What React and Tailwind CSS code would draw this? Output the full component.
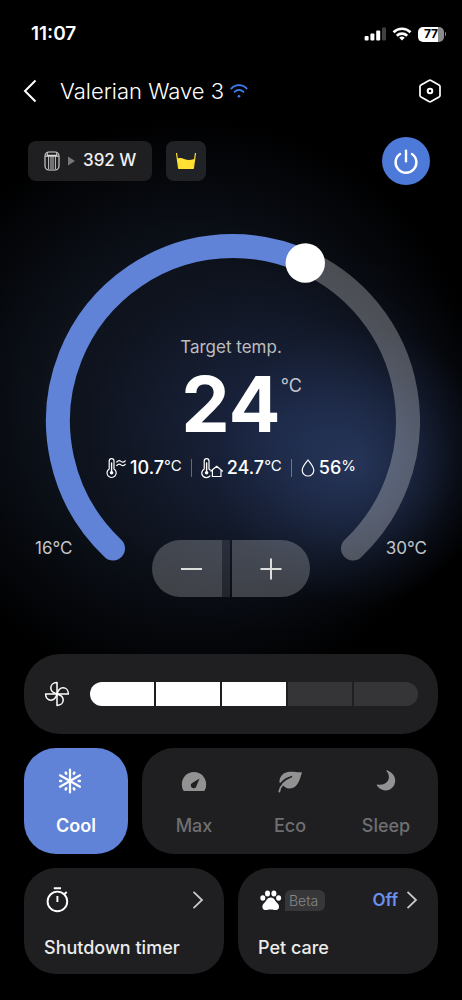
import React, { useState } from "react";

const MIN_TEMP = 16;
const MAX_TEMP = 30;

const SignalIcon = () => (
  <svg width="22" height="14" viewBox="0 0 22 14" fill="white" aria-hidden="true">
    <rect x="0.6" y="9" width="4" height="4.5" rx="1" />
    <rect x="6.4" y="6.5" width="4" height="7" rx="1" />
    <rect x="12.2" y="3.6" width="4" height="9.9" rx="1" />
    <rect x="18" y="0.4" width="4" height="13.1" rx="1" opacity="0.25" />
  </svg>
);

const StatusWifiIcon = () => (
  <svg width="20" height="14" viewBox="0 0 20 14" fill="none" stroke="white" strokeWidth="2.6" aria-hidden="true">
    <path d="M1.5 5.2a12.2 12.2 0 0 1 17 0" />
    <path d="M4.8 8.7a7.5 7.5 0 0 1 10.4 0" />
    <path d="M10 13.6 7.2 10.8a4 4 0 0 1 5.6 0Z" fill="white" stroke="none" />
  </svg>
);

const Battery = () => (
  <div className="flex items-center gap-px">
    <div className="flex h-[15px] w-[26px] items-center justify-center rounded-[5px] bg-[linear-gradient(to_right,#ffffff_78%,#8b8b8b_78%)] text-xs font-bold leading-none text-black">
      77
    </div>
    <div className="h-1 w-px rounded-r bg-[#8b8b8b]" />
  </div>
);

const BackIcon = () => (
  <svg width="14" height="24" viewBox="0 0 14 24" fill="none" stroke="white" strokeWidth="2" aria-hidden="true">
    <path d="M12.5 1.5 2 12l10.5 10.5" />
  </svg>
);

const BlueWifiIcon = () => (
  <svg width="18" height="16" viewBox="0 0 18 16" fill="none" stroke="#3f7ef5" strokeWidth="1.7" strokeLinecap="round" aria-hidden="true">
    <path d="M1.3 5.6c4.3-4.6 11.1-4.6 15.4 0" />
    <path d="M4.5 8.9c2.7-2.6 6.3-2.6 9 0" />
    <circle cx="9" cy="13.2" r="1.3" fill="#3f7ef5" stroke="none" />
  </svg>
);

const HexIcon = () => (
  <svg width="24" height="24" viewBox="0 0 24 24" fill="none" stroke="white" strokeWidth="1.7" strokeLinejoin="round" aria-hidden="true">
    <path d="M11 1.4q1-.5 2 0l8 4.5q1 .6 1 1.6v9q0 1-1 1.6l-8 4.5q-1 .5-2 0l-8-4.5q-1-.6-1-1.6v-9q0-1 1-1.6Z" />
    <circle cx="12" cy="12" r="2.3" strokeWidth="2" />
  </svg>
);

const UnitIcon = () => (
  <svg width="16" height="20" viewBox="0 0 16 20" fill="none" stroke="#d8d8d8" strokeWidth="1.1" aria-hidden="true">
    <rect x="1" y="1" width="14" height="18" rx="4" />
    <path d="M3.2 1.8v2.600h9.600V1.800M1.200 5.200h13.600" />
    <path d="M4.600 5.200V18M7 5.200V18M9 5.200V18M11.400 5.200V18" strokeWidth="0.900" />
  </svg>
);

const TankIcon = () => (
  <svg width="22" height="18" viewBox="0 0 22 18" fill="none" aria-hidden="true">
    <path d="M1.5 1 3.6 16.2h14.8L20.5 1" stroke="#ffe033" strokeWidth="1.2" />
    <path d="M2.6 6.4c3-.8 5.400.2 8 1.100s5.600.2 8.800-.5L18.200 17H3.800Z" fill="#ffe033" />
  </svg>
);

const PowerIcon = () => (
  <svg width="28" height="28" viewBox="0 0 28 28" fill="none" stroke="white" strokeWidth="2.400" strokeLinecap="round" aria-hidden="true">
    <path d="M14 3.800v10.400" />
    <path d="M8 6.900a10.400 10.400 0 1 0 12 0" />
  </svg>
);

const OutdoorIcon = () => (
  <svg width="20" height="22" viewBox="0 0 20 22" fill="none" stroke="white" strokeWidth="1.2" strokeLinecap="round" aria-hidden="true">
    <path d="M3.200 12V4a2.400 2.400 0 0 1 4.800 0v8a4.600 4.600 0 1 1-4.800 0Z" />
    <path d="M5.600 6v8" strokeWidth="1.400" />
    <circle cx="5.600" cy="15.800" r="1.800" fill="white" stroke="none" />
    <path d="M10.800 5c1.400-1.700 2.800-1.700 4.200-.6s2.800 1 4.200-.6M10.800 8.500c1.400-1.700 2.800-1.700 4.200-.6s2.800 1 4.200-.6" />
  </svg>
);

const IndoorIcon = () => (
  <svg width="22" height="22" viewBox="0 0 22 22" fill="none" stroke="white" strokeWidth="1.2" strokeLinecap="round" strokeLinejoin="round" aria-hidden="true">
    <path d="M9 18.900A4.600 4.600 0 1 1 3.200 12V4a2.400 2.400 0 0 1 4.800 0v8l1.200 1" />
    <path d="M5.600 6v8" strokeWidth="1.400" />
    <circle cx="5.600" cy="15.800" r="1.800" fill="white" stroke="none" />
    <path d="m10 14 5.700-4.700 5.700 4.700M11.400 13.200v6.300h8.600v-6.300" />
  </svg>
);

const DropIcon = () => (
  <svg width="14" height="20" viewBox="0 0 14 20" fill="none" stroke="white" strokeWidth="1.200" strokeLinejoin="round" aria-hidden="true">
    <path d="M7 2C4.800 5 1.200 8.600 1.200 12.200a5.800 5.800 0 0 0 11.600 0C12.800 8.600 9.200 5 7 2Z" />
  </svg>
);

const FanIcon = () => (
  <svg width="26" height="26" viewBox="0 0 26 26" fill="none" stroke="white" strokeWidth="1.500" strokeLinejoin="round" aria-hidden="true">
    <path id="blade" d="M13 13V1.600C9 1.600 6.800 4.100 6.800 7s2.600 5 6.200 6Z" />
    <use href="#blade" transform="rotate(90 13 13)" />
    <use href="#blade" transform="rotate(180 13 13)" />
    <use href="#blade" transform="rotate(270 13 13)" />
  </svg>
);

// wide box: the flake sits left of the label's middle
const SnowIcon = () => (
  <svg width="38" height="26" viewBox="0 0 38 26" fill="none" stroke="white" strokeWidth="2.200" strokeLinecap="round" aria-hidden="true">
    <path d="M13 1.600v22.800M3 7.300l20 11.400M23 7.300 3 18.700" />
    <path
      strokeWidth="2.600"
      d="M8.700 4.700l.5.900M17.300 4.700l-.5.900M8.700 21.300l.5-.9M17.300 21.300l-.5-.9M3.200 13h1M22.800 13h-1"
    />
  </svg>
);

const GaugeIcon = () => (
  <svg width="26" height="26" viewBox="0 0 26 26" fill="#929293" aria-hidden="true">
    <path
      fillRule="evenodd"
      d="M2.400 22.400Q.8 19.800.8 16.500C.8 9.300 6.200 4 13 4s12.200 5.300 12.200 12.500q0 3.300-1.600 5.900-.4.600-1 .6H3.400q-.6 0-1-.6ZM18.600 10.400l-7 4.300a2.900 2.900 0 1 0 4 2.800Z"
    />
  </svg>
);

const LeafIcon = () => (
  <svg width="26" height="26" viewBox="0 0 26 26" fill="none" aria-hidden="true">
    <path d="M2.500 14.800C2 8.500 6.500 3.900 13 3.800c4.300-.1 7.800.7 11.200.5.500 0 .8.300.6.800-2 6.500-4.200 15.400-12 15.400-2 0-3.600-.5-4.800-1.500Z" fill="#929293" />
    <path d="M.8 21c2.400-6.500 7-10 14.400-12.200" stroke="#1f1f21" strokeWidth="2.200" />
    <path d="M2.300 23.500c1.200-6.400 5.400-10.400 12.900-13.500" stroke="#929293" strokeWidth="1.800" strokeLinecap="round" />
    <path d="m2.600 16 2.800-2.400L3.800 18Z" fill="#1f1f21" />
    <path d="M4.800 23.500c.4-1.600 1-2.800 2-3.900" stroke="#1f1f21" strokeWidth="1.600" />
  </svg>
);

const MoonIcon = () => (
  <svg width="26" height="26" viewBox="0 0 26 26" fill="#929293" aria-hidden="true">
    <path d="M13.600 3.300c-.6-.7 0-1.200.8-.9 4.600 1.700 7.800 5.500 7.800 10 0 5.600-4.300 10-9.600 10-3.600 0-7-1.900-8.600-4.800-.4-.8 0-1.300.9-1.100 6 1 11-2.500 11-7.600 0-2.100-.9-4-2.300-5.600Z" />
  </svg>
);

const TimerIcon = () => (
  <svg width="26" height="26" viewBox="0 0 26 26" fill="none" stroke="white" strokeWidth="1.900" aria-hidden="true">
    <circle cx="13.400" cy="14.400" r="9.800" />
    <path d="M13.400 9v6M9.800 1.300h7.200M20.300 7.300l2.400-2.300" />
  </svg>
);

const PawIcon = () => (
  <svg width="24" height="22" viewBox="0 0 24 22" fill="white" aria-hidden="true">
    <ellipse cx="4.800" cy="9" rx="2.500" ry="2.800" />
    <ellipse cx="9.500" cy="4.500" rx="2.500" ry="3" />
    <ellipse cx="15.900" cy="4.500" rx="2.500" ry="3" />
    <ellipse cx="20.600" cy="9" rx="2.500" ry="2.800" />
    <path d="M12.700 8.500c3.300 0 4.100 3 6 5s2.700 3.200 2.200 5.200c-.6 2.400-2.800 2.600-4.600 2.200-2.500-.6-4.800-.6-7.200 0-1.800.4-4 .2-4.600-2.200-.5-2 .3-3.200 2.200-5.200s2.700-5 6-5Z" />
  </svg>
);

const ChevronIcon = () => (
  <svg width="12" height="20" viewBox="0 0 12 20" fill="none" stroke="#c9c9c9" strokeWidth="1.800" aria-hidden="true">
    <path d="m1.500 1.800 8.500 8.200-8.500 8.200" />
  </svg>
);

// the arc opens downwards, 273 degrees in all
const Ring = () => (
  <svg width="378" height="328" viewBox="0 0 378 328" fill="none" strokeWidth="24" strokeLinecap="round" aria-hidden="true">
    <path d="M263.600 27.800A175 175 0 0 1 311 314.400" stroke="white" strokeOpacity="0.270" />
    <path d="M71 314.400A175 175 0 0 1 191 12A175 175 0 0 1 263.600 27.800" stroke="#6083d8" />
    <circle cx="263.300" cy="29" r="19.700" fill="white" />
  </svg>
);

const Reading = ({ icon, value, unit }) => (
  <div className="flex items-center gap-1">
    {icon}
    <span className="flex items-start text-lg font-medium leading-6 text-white">
      {value}
      <span className="text-[15px] font-normal leading-5">{unit}</span>
    </span>
  </div>
);

const MODES = [
  { name: "Max", Icon: GaugeIcon },
  { name: "Eco", Icon: LeafIcon },
  { name: "Sleep", Icon: MoonIcon },
];

export default function App() {
  const [temp, setTemp] = useState(24);
  const [fan, setFan] = useState(3);

  return (
    <div className="min-h-screen bg-black pb-[26px] font-['Inter',sans-serif] text-white">
      <div className="bg-[radial-gradient(circle_140px_at_77%_71%,#31457399_0,#2c3f6b66_40%,#2c3f6b26_70%,transparent),radial-gradient(ellipse_225px_200px_at_60%_66%,#1b2743_0,#18213ad9_30%,#131a2c8c_60%,#0b0f1b33_85%,transparent),radial-gradient(ellipse_290px_290px_at_42%_62%,#141a28_0,#0d121b_50%,#05070b_80%,transparent)]">
        <div className="flex h-[68px] items-center justify-between pl-[31px] pr-4">
          <span className="text-[19px] font-semibold leading-6">11:07</span>
          <div className="flex items-center gap-[6px]">
            <SignalIcon />
            <StatusWifiIcon />
            <Battery />
          </div>
        </div>

        <header className="flex h-[46px] items-center justify-between pl-[23px] pr-5">
          <div className="flex items-center">
            <button aria-label="Back" className="mr-[23px] cursor-pointer">
              <BackIcon />
            </button>
            <h1 className="text-[22px] font-light leading-7">Valerian Wave 3</h1>
            <span className="ml-[6px]">
              <BlueWifiIcon />
            </span>
          </div>
          <button aria-label="Settings" className="cursor-pointer">
            <HexIcon />
          </button>
        </header>

        <div className="mt-[23px] flex items-center justify-between pl-7 pr-8">
          <div className="flex gap-[14px]">
            <div className="flex h-10 items-center gap-2 rounded-lg bg-[#1f1f21] px-4 text-[17px] font-medium text-[#f0f0f0]">
              <UnitIcon />
              <svg width="7" height="10" viewBox="0 0 7 10" fill="#77777a" aria-hidden="true">
                <path d="M0 .5 7 5 0 9.500Z" />
              </svg>
              392 W
            </div>
            <div className="flex size-10 items-center justify-center rounded-lg bg-[#212225]">
              <TankIcon />
            </div>
          </div>
          <button aria-label="Power" className="flex size-12 cursor-pointer items-center justify-center rounded-full bg-[#4d79d9]">
            <PowerIcon />
          </button>
        </div>

        <div className="grid pb-[57px] pt-[49px]">
          <div className="col-start-1 row-start-1 flex justify-center">
            <Ring />
          </div>
          <div className="col-start-1 row-start-1 flex flex-col pt-[103px]">
            <p className="text-center text-[17px] leading-5 text-[#bdbdbf]">Target temp.</p>
            <div className="mb-3 mt-[7px] flex justify-center">
              <div className="relative text-[77px] font-bold leading-[80px]">
                {temp}
                <span className="absolute left-full top-3 text-lg font-normal leading-5 text-[#c4c6cc]">°C</span>
              </div>
            </div>
            <div className="flex items-center justify-center gap-[9px]">
              <Reading icon={<OutdoorIcon />} value="10.7" unit="°C" />
              <span className="h-[18px] w-px bg-white/35" />
              <Reading icon={<IndoorIcon />} value="24.7" unit="°C" />
              <span className="h-[18px] w-px bg-white/35" />
              <Reading icon={<DropIcon />} value="56" unit="%" />
            </div>
            <div className="mt-[60px] flex items-start justify-between px-[35px] text-[17px] leading-4 text-[#c4c5c9]">
              <span className="w-11">{MIN_TEMP}°C</span>
              <div className="flex h-[57px] gap-[2px] overflow-hidden rounded-full">
                <button
                  aria-label="Lower temperature"
                  onClick={() => setTemp(Math.max(MIN_TEMP, temp - 1))}
                  className="flex w-[78px] cursor-pointer items-center justify-center bg-[linear-gradient(to_right,#ffffff38_70px,#ffffff1a_70px)]"
                >
                  <span className="h-[2px] w-[21px] bg-[#dddddd]" />
                </button>
                <button
                  aria-label="Raise temperature"
                  onClick={() => setTemp(Math.min(MAX_TEMP, temp + 1))}
                  className="flex w-[78px] cursor-pointer items-center justify-center bg-white/22"
                >
                  <svg width="22" height="22" viewBox="0 0 22 22" stroke="#dddddd" strokeWidth="2" aria-hidden="true">
                    <path d="M11 .5v21M.5 11h21" />
                  </svg>
                </button>
              </div>
              <span className="w-11 text-right">{MAX_TEMP}°C</span>
            </div>
          </div>
        </div>
      </div>

      <div className="flex flex-col gap-[14px] px-6">
        <div className="flex items-center gap-5 rounded-[36px] bg-[#1f1f21] px-5 py-[27px]">
          <FanIcon />
          <div className="flex h-6 flex-1 gap-[2px] overflow-hidden rounded-full">
            {[1, 2, 3, 4, 5].map((level) => (
              <button
                key={level}
                aria-label={`Fan speed ${level}`}
                onClick={() => setFan(level)}
                className={`flex-1 cursor-pointer ${level <= fan ? "bg-white" : "bg-[#353537]"}`}
              />
            ))}
          </div>
        </div>

        <div className="flex gap-[14px]">
          <button className="flex w-[104px] cursor-pointer flex-col items-center gap-5 rounded-[32px] bg-[#6083d8] pb-4 pt-5 text-lg font-semibold leading-6">
            <SnowIcon />
            Cool
          </button>
          <div className="grid flex-1 grid-cols-3 rounded-[32px] bg-[#1f1f21] px-1">
            {MODES.map(({ name, Icon }) => (
              <button key={name} className="flex cursor-pointer flex-col items-center gap-5 pb-4 pt-5 text-lg font-medium leading-6 text-[#6f6f71]">
                <Icon />
                {name}
              </button>
            ))}
          </div>
        </div>

        <div className="grid grid-cols-2 gap-[14px]">
          <button className="flex cursor-pointer flex-col gap-6 rounded-[32px] bg-[#1f1f21] px-5 pb-[14px] pt-5 text-left">
            <span className="flex h-6 w-full items-center justify-between">
              <TimerIcon />
              <ChevronIcon />
            </span>
            <span className="text-lg font-medium leading-6 text-[#ebebeb]">Shutdown timer</span>
          </button>
          <button className="flex cursor-pointer flex-col gap-6 rounded-[32px] bg-[#1f1f21] px-5 pb-[14px] pt-5 text-left">
            <span className="flex h-6 w-full items-center">
              <PawIcon />
              <span className="ml-[3px] rounded-md rounded-bl-none bg-[#373739] pl-1 pr-[7px] text-sm font-light leading-[21px] text-[#88888a]">Beta</span>
              <span className="ml-auto mr-2 text-[17px] font-semibold leading-6 text-[#6b90ee]">Off</span>
              <ChevronIcon />
            </span>
            <span className="text-lg font-medium leading-6 text-[#ebebeb]">Pet care</span>
          </button>
        </div>
      </div>
    </div>
  );
}
